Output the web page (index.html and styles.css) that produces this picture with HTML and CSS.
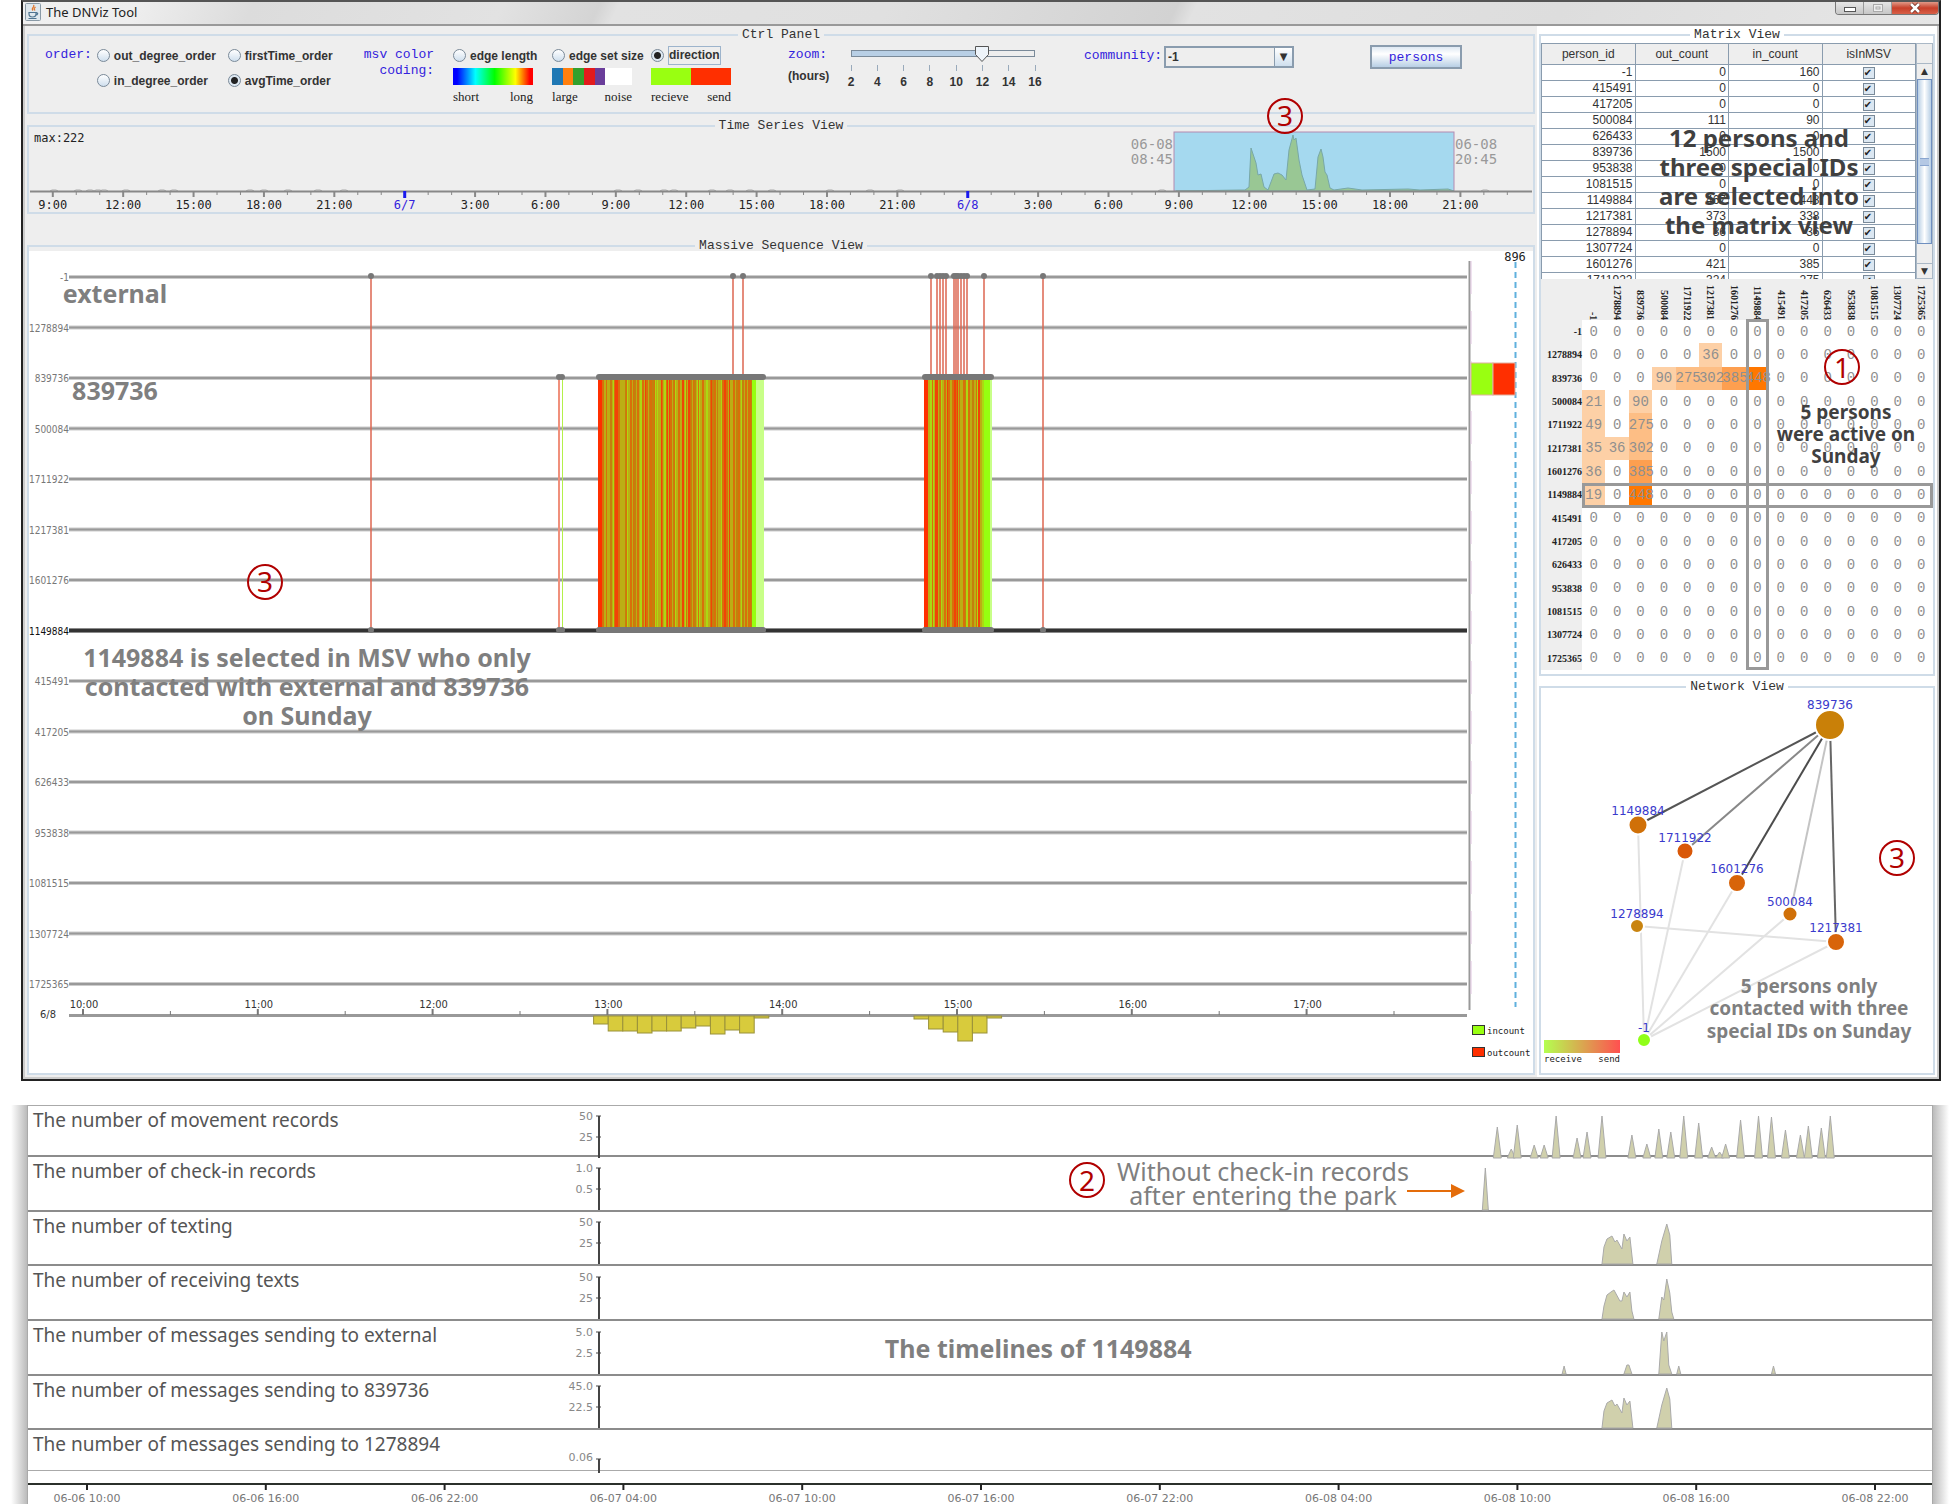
FILE: index.html
```html
<!DOCTYPE html>
<html lang="en">
<head>
    <meta charset="UTF-8" />
    <meta name="viewport" content="width=device-width, initial-scale=1.0"/>
    <title>The DNViz Tool</title>
    <link rel="stylesheet" href="styles.css">
</head>
<body>
    <main class="window">
        <header class="titlebar">
            <svg class="java-icon" viewBox="0 0 16 18">
                <rect x="0.5" y="0.5" width="15" height="17" rx="1" fill="#dfe8ee" stroke="#8a9aa6"/>
                <path d="M8.500 2c2 2-3 3-.5 5.500M10.500 4c-2 1.500-1.500 2-.5 3.500" fill="none" stroke="#e0762c" stroke-width="1.300"/>
                <path d="M4 9.500h7v1.500c0 2-1 3-3.500 3S4 13 4 11zM11 10c2.500-.5 2 2-.5 2.200M3.500 15.500h8" fill="none" stroke="#4f7490" stroke-width="1.200"/>
            </svg>
            <h1>The DNViz Tool</h1>
            <div class="window-buttons">
                <button type="button" aria-label="Minimize"><svg viewBox="0 0 12 8"><rect x="0.5" y="3.500" width="11" height="4" fill="#fff" stroke="#555"/></svg></button>
                <button type="button" aria-label="Maximize" disabled><svg viewBox="0 0 12 8"><rect x="1.500" y="0.5" width="9" height="7" fill="#eee" stroke="#aaa"/><rect x="4" y="3" width="4" height="2" fill="none" stroke="#aaa"/></svg></button>
                <button type="button" class="close" aria-label="Close"><svg viewBox="0 0 12 8"><path d="M2 0l8 8M10 0l-8 8" stroke="#6b2a20" stroke-width="4"/><path d="M2 0l8 8M10 0l-8 8" stroke="#fff" stroke-width="2.500"/></svg></button>
            </div>
        </header>

        <div class="workspace">
            <div class="left-side">
                <fieldset class="panel">
                    <legend>Ctrl Panel</legend>
                    <form class="controls">
                        <span class="caption">order:</span>
                        <div class="order-options">
                            <label><input type="radio" name="order">out_degree_order</label>
                            <label><input type="radio" name="order">firstTime_order</label>
                            <label><input type="radio" name="order">in_degree_order</label>
                            <label><input type="radio" name="order" checked>avgTime_order</label>
                        </div>
                        <span class="caption msv-caption">msv color<br>coding:</span>
                        <div class="coding">
                            <label><input type="radio" name="coding">edge length</label>
                            <div class="swatch rainbow"></div>
                            <div class="swatch-ends"><span>short</span><span>long</span></div>
                        </div>
                        <div class="coding">
                            <label><input type="radio" name="coding">edge set size</label>
                            <div class="swatch sets"></div>
                            <div class="swatch-ends"><span>large</span><span>noise</span></div>
                        </div>
                        <div class="coding">
                            <label><input type="radio" name="coding" checked><span class="focused">direction</span></label>
                            <div class="swatch direction"></div>
                            <div class="swatch-ends"><span>recieve</span><span>send</span></div>
                        </div>
                        <label class="zoom-label" for="zoom"><span class="caption">zoom:</span>(hours)</label>
                        <div class="zoom">
                            <input type="range" id="zoom" min="2" max="16" step="2" value="12">
                            <div class="zoom-ticks"><span>2</span><span>4</span><span>6</span><span>8</span><span>10</span><span>12</span><span>14</span><span>16</span></div>
                        </div>
                        <label class="caption community-label" for="community">community:</label>
                        <div class="select-box">
                            <select id="community"><option>-1</option></select>
                        </div>
                        <button type="button" class="persons">persons</button>
                    </form>
                </fieldset>

                <fieldset class="panel series-panel">
                    <legend>Time Series View</legend>
                    <svg id="series" viewBox="29 134 1504 78"></svg>
                </fieldset>

                <fieldset class="panel msv-panel">
                    <legend>Massive Sequence View</legend>
                    <svg id="msv" viewBox="29 251 1504 822"></svg>
                </fieldset>
            </div>

            <div class="right-side">
                <fieldset class="panel matrix-panel">
                    <legend>Matrix View</legend>
                    <div class="person-list">
                        <table class="person-table">
                            <thead>
                                <tr><th>person_id</th><th>out_count</th><th>in_count</th><th>isInMSV</th></tr>
                            </thead>
                            <tbody id="personRows"></tbody>
                        </table>
                        <div class="scrollbar">
                            <span class="scroll-corner"></span>
                            <span class="scroll-arrow up"></span>
                            <span class="scroll-thumb"></span>
                            <span class="scroll-arrow down"></span>
                        </div>
                        <p class="note note-list">12 persons and<br>three special IDs<br>are selected into<br>the matrix view</p>
                    </div>
                    <div class="matrix">
                        <table class="matrix-table" id="matrixTable"></table>
                        <span class="picked-column"></span>
                        <span class="picked-row"></span>
                        <span class="badge badge-matrix">1</span>
                        <p class="note note-matrix">5 persons<br>were active on<br>Sunday</p>
                    </div>
                </fieldset>

                <fieldset class="panel">
                    <legend>Network View</legend>
                    <svg id="network" viewBox="1541 695 392 378"></svg>
                </fieldset>
            </div>
        </div>
    </main>

    <section class="timelines">
        <div class="timeline-box">
            <div id="timelineRows"></div>
            <svg id="timelineAxis" viewBox="28 1471 1904 33"></svg>
            <span class="badge badge-checkin">2</span>
            <p class="note-checkin">Without check-in records<br>after entering the park</p>
            <svg class="arrow" viewBox="0 0 58 14"><path d="M0 7h46" stroke="#e46c0a" stroke-width="2"/><path d="M44 0l14 7-14 7z" fill="#e46c0a"/></svg>
            <h2>The timelines of 1149884</h2>
        </div>
    </section>

    <script src="app.js"></script>
</body>
</html>
```
FILE: styles.css
```css
* {
    box-sizing: border-box;
    margin: 0;
    padding: 0;
}

body {
    background: #fff;
    color: #333;
    font-family: "Liberation Sans", Arial, sans-serif;
    font-size: 12px;
}

svg {
    display: block;
    width: 100%;
    overflow: visible;
}

/* window frame */
.window {
    margin: 0 19px 0 21px;
    border: 2px solid #222;
    border-top-color: #555;
    background: #ccc;
    padding: 0 2px 2px;
}

.titlebar {
    display: flex;
    align-items: center;
    height: 24px;
    margin: 0 -2px;
    padding: 0 0 3px 2px;
    border-bottom: 2px solid #999;
    background: linear-gradient(115deg, #f0f0f0 0%, #eee 6%, #dcdcdc 12%, #e2e2e2 25%, #d4d4d4 30%, #e2e2e2 31%, #e0e0e0 45%, #d2d2d2 60%, #e2e2e2 61%, #ddd 80%, #e6e6e6 100%);
}

.java-icon {
    width: 16px;
    height: 18px;
}

.titlebar h1 {
    flex: 1;
    margin-left: 5px;
    font: 13px "Noto Sans", sans-serif;
    color: #222;
}

.window-buttons {
    display: flex;
    align-self: flex-start;
    height: 13px;
    border: 1px solid #777;
    border-top: 0;
    border-radius: 0 0 4px 4px;
    overflow: hidden;
}

.window-buttons button {
    display: flex;
    align-items: center;
    justify-content: center;
    width: 28px;
    border: 0;
    border-right: 1px solid #999;
    background: linear-gradient(#e6e6e6, #c6c6c6);
}

.window-buttons button.close {
    width: 46px;
    border-right: 0;
    background: linear-gradient(#e09a88, #c8402a 50%, #d86048);
}

.window-buttons svg {
    width: 12px;
    height: 8px;
}

/* panels */
.workspace {
    display: grid;
    grid-template-columns: minmax(0, 1fr) 400px;
}

.left-side {
    padding: 1px 2px 2px;
    background: #eee;
}

.right-side {
    padding: 1px 2px 2px;
    background: #fff;
}

.panel {
    min-width: 0;
    border: 2px solid #cfdce8;
}

.panel legend {
    margin: 0 auto;
    padding: 0 4px;
    font: 13px/16px "Liberation Mono", monospace;
    color: #333;
}

.series-panel {
    margin-top: 4px;
}

.msv-panel {
    margin-top: 24px;
}

.matrix-panel {
    margin-bottom: 3px;
    padding-bottom: 4px;
}

#msv {
    margin-top: -3px;
    background: #fff;
}

/* control panel */
.controls {
    display: flex;
    align-items: flex-start;
    height: 69px;
    padding-left: 16px;
    font-weight: bold;
}

.controls label {
    display: flex;
    align-items: center;
    height: 25px;
    white-space: nowrap;
}

.controls .caption {
    font: 13px/24px "Liberation Mono", monospace;
    color: #3322dd;
}

.controls input[type="radio"] {
    appearance: none;
    flex: none;
    width: 13px;
    height: 13px;
    margin-right: 4px;
    border: 1px solid #7a8a99;
    border-radius: 50%;
    background: linear-gradient(#fff, #cfdfee);
}

.controls input[type="radio"]:checked {
    background: radial-gradient(circle, #222 0 3px, #dde8f2 4px);
}

.order-options {
    display: grid;
    grid-template-columns: 131px 130px;
    margin-left: 5px;
}

.controls .msv-caption {
    margin-left: 6px;
    padding-top: 4px;
    line-height: 16px;
    text-align: right;
}

.coding {
    width: 80px;
    margin-left: 19px;
}

.swatch {
    height: 17px;
}

.rainbow {
    background: linear-gradient(to right, #00f 5%, #0ff 28%, #0f0 52%, #ff0 78%, #f00 96%);
}

.sets {
    background: linear-gradient(to right, #1f78b4 11px, #ff7f0e 11px 21px, #33a02c 21px 32px, #e31a1c 32px 43px, #6a3d9a 43px 53px, #fff 53px);
}

.direction {
    background: linear-gradient(to right, #99ff11 50%, #ff2f00 50%);
}

.swatch-ends {
    display: flex;
    justify-content: space-between;
    font: 13px/24px "Liberation Serif", serif;
    color: #222;
}

.focused {
    height: 19px;
    border: 1px solid #9db4cc;
    line-height: 17px;
}

.controls .zoom-label {
    display: block;
    width: 44px;
    height: auto;
    margin-left: 57px;
    line-height: 18px;
}

.zoom-label .caption {
    display: block;
}

.zoom {
    width: 198px;
    margin: 3px 0 0 12px;
}

/* the bar is inset by half a thumb so it ends on the first and last tick */
.zoom input {
    appearance: none;
    display: block;
    width: 100%;
    height: 16px;
    background:
        linear-gradient(to right, #b8cfe5 72%, #eee 72%) center 5px / calc(100% - 16px) 5px no-repeat,
        linear-gradient(#7a8a99, #7a8a99) center 4px / calc(100% - 14px) 7px no-repeat;
}

.zoom input::-webkit-slider-runnable-track {
    height: 16px;
}

.zoom input::-webkit-slider-thumb {
    appearance: none;
    width: 14px;
    height: 16px;
    background: url("data:image/svg+xml,%3Csvg xmlns='http://www.w3.org/2000/svg' viewBox='0 0 14 16'%3E%3Cpath d='M.5.5h13v8l-6.500 7-6.500-7z' fill='%23eef4fa' stroke='%23555'/%3E%3C/svg%3E");
}

.zoom-ticks {
    display: flex;
    justify-content: space-between;
    margin-top: 3px;
}

.zoom-ticks span {
    width: 14px;
    text-align: center;
}

.zoom-ticks span::before {
    content: "";
    display: block;
    width: 1px;
    height: 6px;
    margin: 0 auto 4px;
    background: #9ab;
}

.controls .community-label {
    margin-left: 42px;
    line-height: 28px;
}

.select-box {
    position: relative;
    width: 130px;
    margin: 3px 0 0 2px;
}

.select-box select {
    appearance: none;
    display: block;
    width: 100%;
    height: 22px;
    padding: 0 2px;
    border: 2px solid #8a9cae;
    border-radius: 0;
    background: #eee;
    color: #333;
    font: bold 12px "Liberation Sans", sans-serif;
}

.select-box::after {
    content: "▼";
    position: absolute;
    top: 2px;
    right: 2px;
    width: 17px;
    border-left: 1px solid #8a9cae;
    background: linear-gradient(#fff, #cfdfee);
    font: 10px/18px "DejaVu Sans", sans-serif;
    text-align: center;
    pointer-events: none;
}

.persons {
    width: 92px;
    height: 24px;
    margin: 2px 0 0 76px;
    border: 2px solid #8a9cae;
    background: linear-gradient(#dfe9f3, #fff 35%, #b8cfe5);
    color: #3322dd;
    font: 13px "Liberation Mono", monospace;
}

/* person list */
.person-list {
    position: relative;
    display: flex;
    height: 236px;
    overflow: hidden;
}

.person-table {
    width: calc(100% - 17px);
    align-self: flex-start;
    border-collapse: collapse;
    table-layout: fixed;
    background: #fff;
}

.person-table th,
.person-table td {
    height: 16px;
    padding: 0 2px;
    border: 1px solid #8a9cae;
    font-weight: normal;
    line-height: 15px;
    text-align: right;
}

.person-table th {
    height: 21px;
    background: #eee;
    text-align: center;
}

.person-table td:last-child {
    text-align: center;
}

.person-table input {
    appearance: none;
    display: block;
    width: 12px;
    height: 12px;
    margin: 0 auto;
    border: 1px solid #7a8a99;
    background: #dbe7f2;
}

.person-table input::before {
    content: "✔";
    display: block;
    font: 10px/10px "DejaVu Sans", sans-serif;
    color: #222;
}

.scrollbar {
    display: flex;
    flex: none;
    flex-direction: column;
    width: 17px;
    border: 1px solid #aab8c6;
    background: #eee;
}

.scroll-corner {
    height: 20px;
    border-bottom: 1px solid #aab8c6;
}

.scroll-arrow {
    height: 15px;
    font: 9px/15px "DejaVu Sans", sans-serif;
    text-align: center;
}

.scroll-arrow.up::before {
    content: "▲";
}

.scroll-arrow.down {
    margin-top: auto;
    border-top: 1px solid #aab8c6;
}

.scroll-arrow.down::before {
    content: "▼";
}

.scroll-thumb {
    display: flex;
    align-items: center;
    height: 165px;
    border: 1px solid #6f8fc0;
    background: linear-gradient(to right, #b8cfe5, #fff 50%, #b8cfe5);
}

.scroll-thumb::before {
    content: "";
    height: 6px;
    margin: 0 auto;
    border: solid #8aa6d0;
    border-width: 1px 0;
    width: 9px;
    background: #b4c8e4;
}

/* adjacency matrix */
.matrix {
    position: relative;
    background: #eee;
}

.matrix-table {
    width: 100%;
    height: 391px;
    border-collapse: collapse;
    table-layout: fixed;
    background: #eee;
}

.matrix-table th {
    font: bold 10px "Liberation Serif", serif;
    color: #222;
    text-align: right;
}

.matrix-table thead th {
    height: 41px;
    vertical-align: bottom;
}

.matrix-table thead th:first-child {
    width: 41px;
}

.matrix-table thead span {
    display: inline-block;
    margin-right: 6px;
    writing-mode: vertical-rl;
    vertical-align: bottom;
}

.matrix-table td {
    background: #fff;
    color: #8f8f8f;
    font: 14px "Liberation Mono", monospace;
    text-align: center;
    white-space: nowrap;
}

.matrix-table .low {
    background: #fdd0a6;
}

.matrix-table .mid {
    background: #fdbe85;
}

.matrix-table .high {
    background: #fd9f50;
}

.matrix-table .top {
    background: #ff7700;
}

.picked-column,
.picked-row {
    position: absolute;
    border: 3px solid #999;
}

.picked-column {
    top: 40px;
    bottom: 0;
    left: calc(41px + (100% - 41px) * 7 / 15);
    width: calc((100% - 41px) / 15);
}

.picked-row {
    top: calc(41px + 350px * 7 / 15);
    left: 41px;
    right: 0;
    height: 25px;
}

/* notes laid over the views */
.note {
    position: absolute;
    width: 240px;
    color: #404040;
    font-family: "Noto Sans", sans-serif;
    font-weight: bold;
    text-align: center;
}

.note-list {
    top: 80px;
    right: 54px;
    font-size: 24px;
    line-height: 29px;
}

.note-matrix {
    top: 122px;
    right: -33px;
    font-size: 19px;
    line-height: 22px;
}

.badge {
    position: absolute;
    width: 36px;
    height: 36px;
    border: 2px solid #b00000;
    border-radius: 50%;
    color: #b00000;
    font: 28px/32px "Noto Sans", sans-serif;
    text-align: center;
}

.badge-matrix {
    top: 70px;
    right: 73px;
}

text {
    font-family: "DejaVu Sans", sans-serif;
    font-size: 11px;
    fill: #222;
}

.end {
    text-anchor: end;
}

.middle {
    text-anchor: middle;
}

.mono {
    font: 12px "DejaVu Sans Mono", monospace;
}

.mono-large {
    font: 14px "DejaVu Sans Mono", monospace;
    fill: #999;
}

.mono-small {
    font: 9px "DejaVu Sans Mono", monospace;
}

.day {
    fill: #3322dd;
}

.clock {
    font: 11px "DejaVu Sans Condensed", "DejaVu Sans", sans-serif;
    fill: #333;
}

.person {
    font: 10px "DejaVu Sans Condensed", "DejaVu Sans", sans-serif;
    fill: #777;
}

.person.picked {
    fill: #111;
}

.remark {
    font: bold 25px "Noto Sans", sans-serif;
    fill: #7f7f7f;
    text-anchor: middle;
}

.remark-small {
    font-size: 19px;
}

.badge-digit {
    font: 28px "Noto Sans", sans-serif;
    fill: #b00000;
    text-anchor: middle;
}

.node-label {
    font-size: 12px;
    fill: #3a3acc;
    text-anchor: middle;
}

/* timelines */
.timelines {
    margin: 24px 11px 0 11px;
    padding: 0 16px;
    background:
        linear-gradient(to right, #fff, #bbb) left / 16px 100% no-repeat,
        linear-gradient(to left, #fff, #bbb) right / 16px 100% no-repeat;
}

.timeline-box {
    position: relative;
    border: 1px solid #aaa;
    border-bottom: 0;
    background: #fff;
}

.timeline {
    display: grid;
    grid-template-columns: 540px 25px 5px minmax(0, 1fr);
    height: 55px;
    border-bottom: 2px solid #8c8c8c;
}

.timeline:first-child {
    height: 51px;
}

.timeline:nth-child(3n) {
    height: 54px;
}

.timeline:last-child {
    height: 41px;
    border-bottom: 1px solid #aaa;
}

.timeline h3 {
    padding-left: 5px;
    color: #555;
    font: 19px/28px "Noto Sans", sans-serif;
}

.scale {
    display: flex;
    flex-direction: column;
    justify-content: flex-end;
    align-items: flex-end;
    padding-bottom: 10px;
    color: #888;
    font: 11px/21px "DejaVu Sans", sans-serif;
}

.timeline:last-child .scale {
    padding-bottom: 5px;
}

.timeline svg {
    grid-column: 4;
    align-self: end;
    height: 43px;
}

.date {
    fill: #777;
}

.timeline-box h2 {
    position: absolute;
    top: 226px;
    left: 45%;
    color: #7f7f7f;
    font: bold 25px/32px "Noto Sans", sans-serif;
}

.badge-checkin {
    top: 56px;
    left: 1041px;
}

.note-checkin {
    position: absolute;
    top: 53px;
    left: 1085px;
    width: 300px;
    color: #7f7f7f;
    font: 25px/24px "Noto Sans", sans-serif;
    text-align: center;
    white-space: nowrap;
}

.arrow {
    position: absolute;
    top: 78px;
    left: 1379px;
    width: 58px;
    height: 14px;
}
```
FILE: app.js
```js
const SVG_NS = 'http://www.w3.org/2000/svg';

const order = ['-1', '1278894', '839736', '500084', '1711922', '1217381', '1601276', '1149884',
    '415491', '417205', '626433', '953838', '1081515', '1307724', '1725365'];

function draw(parent, tag, attrs, text) {
    const el = document.createElementNS(SVG_NS, tag);
    for (const key in attrs) el.setAttribute(key, attrs[key]);
    if (text !== undefined) el.textContent = text;
    parent.appendChild(el);
    return el;
}

function line(svg, x1, y1, x2, y2, stroke, width) {
    return draw(svg, 'line', { x1, y1, x2, y2, stroke, 'stroke-width': width || 1 });
}

function badge(svg, x, y, digit) {
    draw(svg, 'circle', { cx: x, cy: y, r: 17, fill: 'none', stroke: '#b00000', 'stroke-width': 2 });
    draw(svg, 'text', { x, y: y + 10, class: 'badge-digit' }, digit);
}

// ---- time series ----
function drawSeries() {
    const svg = document.getElementById('series');
    const base = 191;
    const hour = 23.46;

    draw(svg, 'text', { x: 34, y: 142, class: 'mono' }, 'max:222');
    draw(svg, 'rect', { x: 1174, y: 132, width: 280, height: 59, fill: '#a5d9ef', stroke: '#b48ab0' });
    draw(svg, 'polygon', {
        points: '1176,191 1240,190 1245,190 1249,187 1251,148 1256,163 1258,175 1261,174 1264,187 1268,190 1274,174 1278,173 1282,175 1286,180 1289,150 1293,135 1294,140 1296,138 1299,160 1302,175 1307,190 1315,189 1318,157 1321,149 1323,157 1325,172 1327,175 1330,188 1334,190 1348,188 1362,190 1408,189 1420,190 1448,189 1454,191',
        fill: '#99c794', stroke: '#78a8a8'
    });
    // low background activity along the axis
    [54, 78, 90, 98, 104, 126, 162, 174, 250, 264, 288, 318, 344, 618, 638, 664, 674, 712, 730, 750, 772, 830, 870, 900, 1162, 1485].forEach(x => {
        draw(svg, 'path', { d: `M${x - 4} 191l2-1h4l2 1`, fill: 'none', stroke: '#aaa' });
    });
    line(svg, 30, base + 0.5, 1532, base + 0.5, '#888', 2);

    for (let h = 0; h <= 62; h++) {
        const x = 52.8 + h * hour;
        const clock = (9 + h) % 24;
        const major = clock % 3 === 0;
        if (clock === 0) {
            line(svg, x, base, x, 198, '#1a1aee', 3);
        } else {
            line(svg, x, base, x, major ? 197 : 195, '#888', major ? 2 : 1);
        }
        if (major) {
            const label = clock === 0 ? (h === 15 ? '6/7' : '6/8') : clock + ':00';
            draw(svg, 'text', { x, y: 209, class: 'mono middle' + (clock === 0 ? ' day' : '') }, label);
        }
    }

    draw(svg, 'text', { x: 1173, y: 149, class: 'mono-large end' }, '06-08');
    draw(svg, 'text', { x: 1173, y: 164, class: 'mono-large end' }, '08:45');
    draw(svg, 'text', { x: 1455, y: 149, class: 'mono-large' }, '06-08');
    draw(svg, 'text', { x: 1455, y: 164, class: 'mono-large' }, '20:45');
    badge(svg, 1285, 116, '3');
}

// ---- massive sequence view ----
const stripeColors = { R: '#f04406', O: '#d8700a', D: '#c4800c', Y: '#bcae14', G: '#acd812', L: '#96ff10', P: '#c8ff88' };

function drawStripes(svg, x0, pattern) {
    for (let i = 0; i < pattern.length; i++) {
        const x = x0 + i * 2;
        draw(svg, 'rect', { x, y: 377, width: 2, height: 253, fill: stripeColors[pattern[i]] });
        // thin olive and orange lines keep the dense texture
        if (i > 2 && i < pattern.length - 6 && i % 3) {
            draw(svg, 'rect', { x, y: 377, width: 1, height: 253, fill: i % 2 ? stripeColors.Y : stripeColors.O });
        }
    }
    draw(svg, 'rect', { x: x0, y: 377, width: 4, height: 253, fill: '#ff2f00' });
    const end = x0 + pattern.length * 2;
    [377, 630].forEach(y => {
        const cap = line(svg, x0 + 1, y, end - 1, y, '#777', 6);
        cap.setAttribute('stroke-linecap', 'round');
    });
}

function drawBars(svg, x0, heights) {
    heights.forEach((h, i) => {
        draw(svg, 'rect', { x: x0 + i * 14.6, y: 1016, width: 14.6, height: h, fill: '#d8cb3c', stroke: '#99913a' });
    });
}

function drawMsv() {
    const svg = document.getElementById('msv');
    const rowY = i => 277 + i * 50.5;

    order.forEach((id, i) => {
        const picked = id === '1149884';
        line(svg, 69, rowY(i), 1467, rowY(i), '#ccc', 4);
        line(svg, 69, rowY(i), 1467, rowY(i), picked ? '#333' : '#999', picked ? 4 : 2);
        draw(svg, 'text', { x: 69, y: rowY(i) + 4, class: 'person end' + (picked ? ' picked' : '') }, id);
    });

    [371, 733, 743, 931, 937, 940, 943, 946, 954, 956, 958, 961, 964, 967, 984, 1043].forEach(x => {
        line(svg, x, 277, x, 630, '#dc6650', 1.5);
        draw(svg, 'circle', { cx: x, cy: 276, r: 3, fill: '#777' });
        draw(svg, 'circle', { cx: x, cy: 630, r: 3, fill: '#777' });
    });
    line(svg, 559, 377, 559, 630, '#f0907c', 2);
    line(svg, 562.5, 377, 562.5, 630, '#b4f04a', 1);
    [559, 562].forEach(x => {
        draw(svg, 'circle', { cx: x, cy: 377, r: 3, fill: '#777' });
        draw(svg, 'circle', { cx: x, cy: 630, r: 3, fill: '#777' });
    });

    drawStripes(svg, 598, 'RROYYYDGRROYYDGYOODOYGORODODGGYRYGRRODGYOYRGYRDODGGYOYGYRDODYGORORYOYDOGDOYODLLPPPP');
    drawStripes(svg, 924, 'RRYGGRRDGYOROYORROYODGOYDYGRYGLLLP');

    // time axis and message histogram
    line(svg, 69, 1015.5, 1467, 1015.5, '#999', 3);
    for (let h = 0; h < 8; h++) {
        const x = 83 + h * 174.8;
        line(svg, x, 1009, x, 1015, '#777', 2);
        line(svg, x + 87.4, 1011, x + 87.4, 1015, '#777', 1);
        draw(svg, 'text', { x: x + 1, y: 1008, class: 'clock middle' }, (10 + h) + ':00');
    }
    draw(svg, 'text', { x: 40, y: 1018, class: 'clock' }, '6/8');
    drawBars(svg, 593.6, [8, 15, 15, 17, 15, 15, 12, 10, 18, 14, 17, 2]);
    drawBars(svg, 914, [3, 13, 16, 25, 17, 2]);

    // in/out totals
    line(svg, 1469.5, 261, 1469.5, 1010, '#999', 2);
    line(svg, 1471, 261, 1471, 1010, '#e0c4e0', 1).setAttribute('stroke-dasharray', '33 17');
    line(svg, 1515.5, 262, 1515.5, 1007, '#5fb0dd', 2).setAttribute('stroke-dasharray', '6 4');
    draw(svg, 'text', { x: 1515, y: 261, class: 'mono middle' }, '896');
    draw(svg, 'rect', { x: 1471, y: 363, width: 22, height: 32, fill: '#99ff11', stroke: '#e0b0a0' });
    draw(svg, 'rect', { x: 1493, y: 363, width: 22, height: 32, fill: '#ff2f00', stroke: '#e0b0a0' });
    draw(svg, 'rect', { x: 1472.5, y: 1025.5, width: 12, height: 9, fill: '#99ff11', stroke: '#333' });
    draw(svg, 'rect', { x: 1472.5, y: 1047.5, width: 12, height: 9, fill: '#ff2f00', stroke: '#333' });
    draw(svg, 'text', { x: 1487, y: 1034, class: 'mono-small' }, 'incount');
    draw(svg, 'text', { x: 1487, y: 1056, class: 'mono-small' }, 'outcount');

    draw(svg, 'text', { x: 115, y: 303, class: 'remark' }, 'external');
    draw(svg, 'text', { x: 115, y: 400, class: 'remark' }, '839736');
    draw(svg, 'text', { x: 307, y: 667, class: 'remark' }, '1149884 is selected in MSV who only');
    draw(svg, 'text', { x: 307, y: 696, class: 'remark' }, 'contacted with external and 839736');
    draw(svg, 'text', { x: 307, y: 725, class: 'remark' }, 'on Sunday');
    badge(svg, 265, 582, '3');
}

// ---- matrix view ----
const persons = [
    ['-1', 0, 160], ['415491', 0, 0], ['417205', 0, 0], ['500084', 111, 90], ['626433', 0, 0],
    ['839736', 1500, 1500], ['953838', 0, 0], ['1081515', 0, 0], ['1149884', 467, 448],
    ['1217381', 373, 338], ['1278894', 36, 36], ['1307724', 0, 0], ['1601276', 421, 385], ['1711922', 324, 275]
];

const messages = {
    '1278894': { '1217381': 36 },
    '839736': { '500084': 90, '1711922': 275, '1217381': 302, '1601276': 385, '1149884': 448 },
    '500084': { '-1': 21, '839736': 90 },
    '1711922': { '-1': 49, '839736': 275 },
    '1217381': { '-1': 35, '1278894': 36, '839736': 302 },
    '1601276': { '-1': 36, '839736': 385 },
    '1149884': { '-1': 19, '839736': 448 }
};

function shade(count) {
    if (count > 400) return 'top';
    if (count > 350) return 'high';
    if (count > 200) return 'mid';
    return count > 0 ? 'low' : '';
}

function fillTables() {
    document.getElementById('personRows').innerHTML = persons.map(p =>
        `<tr><td>${p[0]}</td><td>${p[1]}</td><td>${p[2]}</td><td><input type="checkbox" aria-label="${p[0]} in MSV" checked></td></tr>`
    ).join('');

    const head = order.map(id => `<th><span>${id}</span></th>`).join('');
    const body = order.map(from => {
        const cells = order.map(to => {
            const count = (messages[from] && messages[from][to]) || 0;
            return `<td class="${shade(count)}">${count}</td>`;
        }).join('');
        return `<tr><th>${from}</th>${cells}</tr>`;
    }).join('');
    document.getElementById('matrixTable').innerHTML =
        `<thead><tr><th></th>${head}</tr></thead><tbody>${body}</tbody>`;
}

// ---- network view ----
const nodes = {
    '839736': [1830, 725, 14, '#c98008'],
    '1149884': [1638, 825, 8.5, '#d07008'],
    '1711922': [1685, 851, 7.5, '#d95808'],
    '1601276': [1737, 883, 8, '#d8640a'],
    '500084': [1790, 914, 6.5, '#d07008'],
    '1217381': [1836, 942, 8, '#d8640a'],
    '1278894': [1637, 926, 6, '#c98410'],
    '-1': [1644, 1040, 6, '#90ff18']
};

const links = [
    ['-1', '1149884', '#e2e2e2'], ['-1', '1711922', '#e2e2e2'], ['-1', '1601276', '#e2e2e2'],
    ['-1', '500084', '#e2e2e2'], ['-1', '1217381', '#e2e2e2'], ['1278894', '1217381', '#e2e2e2'],
    ['839736', '500084', '#c4c4c4'], ['839736', '1711922', '#888'], ['839736', '1217381', '#666'],
    ['839736', '1601276', '#4c4c4c'], ['839736', '1149884', '#555']
];

function drawNetwork() {
    const svg = document.getElementById('network');
    links.forEach(([a, b, color]) => {
        line(svg, nodes[a][0], nodes[a][1], nodes[b][0], nodes[b][1], color, 2);
    });
    for (const id in nodes) {
        const [x, y, r, fill] = nodes[id];
        draw(svg, 'circle', { cx: x, cy: y, r: r + 1, fill, stroke: '#fff', 'stroke-width': 2 });
        draw(svg, 'text', { x, y: y - r - 2, class: 'node-label' }, id);
    }

    const defs = draw(svg, 'defs', {});
    const grad = draw(defs, 'linearGradient', { id: 'sendScale' });
    draw(grad, 'stop', { offset: 0, 'stop-color': '#b4ff50' });
    draw(grad, 'stop', { offset: 1, 'stop-color': '#ff5050' });
    draw(svg, 'rect', { x: 1544, y: 1040, width: 76, height: 13, fill: 'url(#sendScale)' });
    draw(svg, 'text', { x: 1544, y: 1062, class: 'mono-small' }, 'receive');
    draw(svg, 'text', { x: 1620, y: 1062, class: 'mono-small end' }, 'send');

    draw(svg, 'text', { x: 1809, y: 993, class: 'remark remark-small' }, '5 persons only');
    draw(svg, 'text', { x: 1809, y: 1015, class: 'remark remark-small' }, 'contacted with three');
    draw(svg, 'text', { x: 1809, y: 1038, class: 'remark remark-small' }, 'special IDs on Sunday');
    badge(svg, 1897, 858, '3');
}

// ---- timelines ----
function peak(x, h, w = 4) {
    return [[x - w, 0], [x, h], [x + w, 0]];
}

const texting = [
    [[1007, 0], [1009, 17], [1012, 25], [1017, 28], [1020, 22], [1022, 24], [1027, 15], [1029, 30], [1032, 23], [1035, 27], [1038, 0]],
    [[1062, 0], [1067, 23], [1072, 40], [1075, 29], [1077, 0]]
];

const timelines = [
    {
        title: 'The number of movement records', scale: ['50', '25'],
        areas: [[902, 31], [916, 9], [922, 33], [939, 13], [949, 13], [961, 42], [982, 20], [992, 26], [1007, 42],
            [1037, 23], [1052, 14], [1064, 29], [1076, 26], [1089, 42], [1104, 35], [1117, 11], [1125, 6], [1131, 14],
            [1146, 38], [1164, 42], [1177, 41], [1191, 28], [1206, 23], [1214, 32], [1227, 30], [1236, 42]].map(p => peak(p[0], p[1]))
    },
    { title: 'The number of check-in records', scale: ['1.0', '0.5'], areas: [peak(890, 42, 3)] },
    { title: 'The number of texting', scale: ['50', '25'], areas: texting },
    {
        title: 'The number of receiving texts', scale: ['50', '25'],
        areas: [
            [[1007, 0], [1009, 13], [1012, 24], [1016, 27], [1019, 29], [1025, 18], [1027, 18], [1029, 27], [1032, 22], [1035, 27], [1037, 8], [1039, 0]],
            [[1064, 0], [1067, 22], [1069, 19], [1072, 40], [1075, 26], [1077, 7], [1079, 0]]
        ]
    },
    {
        title: 'The number of messages sending to external', scale: ['5.0', '2.5'],
        areas: [peak(969, 8, 2), [[1029, 0], [1032, 9], [1034, 9], [1037, 0]],
            [[1064, 0], [1067, 42], [1069, 33], [1072, 42], [1074, 9], [1077, 0]], peak(1084, 8, 2), peak(1179, 8, 2)]
    },
    { title: 'The number of messages sending to 839736', scale: ['45.0', '22.5'], areas: texting },
    { title: 'The number of messages sending to 1278894', scale: ['0.06'], areas: [] }
];

function drawTimelines() {
    const box = document.getElementById('timelineRows');
    timelines.forEach(t => {
        const row = document.createElement('div');
        row.className = 'timeline';
        row.innerHTML = `<h3>${t.title}</h3><div class="scale">${t.scale.map(s => `<span>${s}</span>`).join('')}</div>`;
        const svg = draw(row, 'svg', { viewBox: '0 0 1338 43', preserveAspectRatio: 'none' });
        t.areas.forEach(points => {
            draw(svg, 'polygon', {
                points: points.map(p => `${p[0]},${43 - p[1]}`).join(' '),
                fill: '#d0d0ac', stroke: '#aaa'
            });
        });
        const short = t.scale.length === 1;
        line(svg, 1, short ? 29 : 1, 1, 43, '#444', 2);
        line(svg, -2, short ? 29 : 1, 3, short ? 29 : 1, '#444', 1);
        if (!short) line(svg, -2, 22, 3, 22, '#444', 1);
        box.appendChild(row);
    });

    const axis = document.getElementById('timelineAxis');
    line(axis, 28, 1484, 1932, 1484, '#2b302b', 2);
    for (let i = 0; i < 11; i++) {
        const x = 87 + i * 178.8;
        const hours = 10 + i * 6;
        const label = `06-0${6 + Math.floor(hours / 24)} ${String(hours % 24).padStart(2, '0')}:00`;
        line(axis, x, 1484, x, 1490, '#222', 2);
        draw(axis, 'text', { x, y: 1502, class: 'date middle' }, label);
    }
}

drawSeries();
drawMsv();
fillTables();
drawNetwork();
drawTimelines();
```
